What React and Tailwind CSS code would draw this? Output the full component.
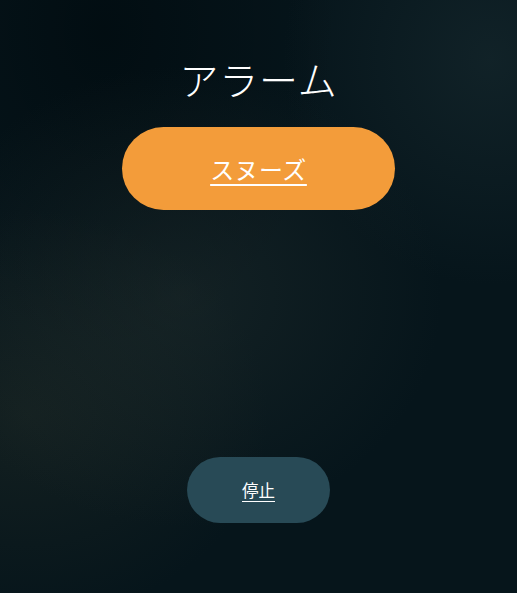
export default function App() {
  return (
    <div
      className="relative w-[517px] h-[593px] overflow-hidden flex flex-col items-center bg-[#06151b]"
      style={{ fontFamily: '"Noto Sans CJK JP", "Noto Sans", sans-serif' }}
    >
      <div className="absolute inset-0 bg-[radial-gradient(ellipse_at_35%_50%,rgba(40,52,50,0.4),transparent_55%),radial-gradient(ellipse_at_5%_70%,rgba(40,48,40,0.4),transparent_35%),radial-gradient(ellipse_at_95%_10%,rgba(30,50,55,0.45),transparent_30%),radial-gradient(ellipse_at_20%_5%,rgba(0,10,14,0.7),transparent_40%)]" />
      <div className="relative flex flex-col items-center">
        <h1 className="mt-[51px] text-[39px] leading-[55px] font-light text-white tracking-[0.02em]">アラーム</h1>
        <button className="mt-[21px] w-[273px] h-[83px] rounded-full bg-[#f39c3a] flex items-center justify-center">
          <span className="text-white text-[24px] font-normal underline underline-offset-[5px] decoration-[1.5px] tracking-[0.02em]">スヌーズ</span>
        </button>
        <button className="mt-[247px] w-[143px] h-[66px] rounded-full bg-[#284a56] flex items-center justify-center">
          <span className="text-white text-[16.5px] font-normal underline underline-offset-[4px]">停止</span>
        </button>
      </div>
    </div>
  );
}
